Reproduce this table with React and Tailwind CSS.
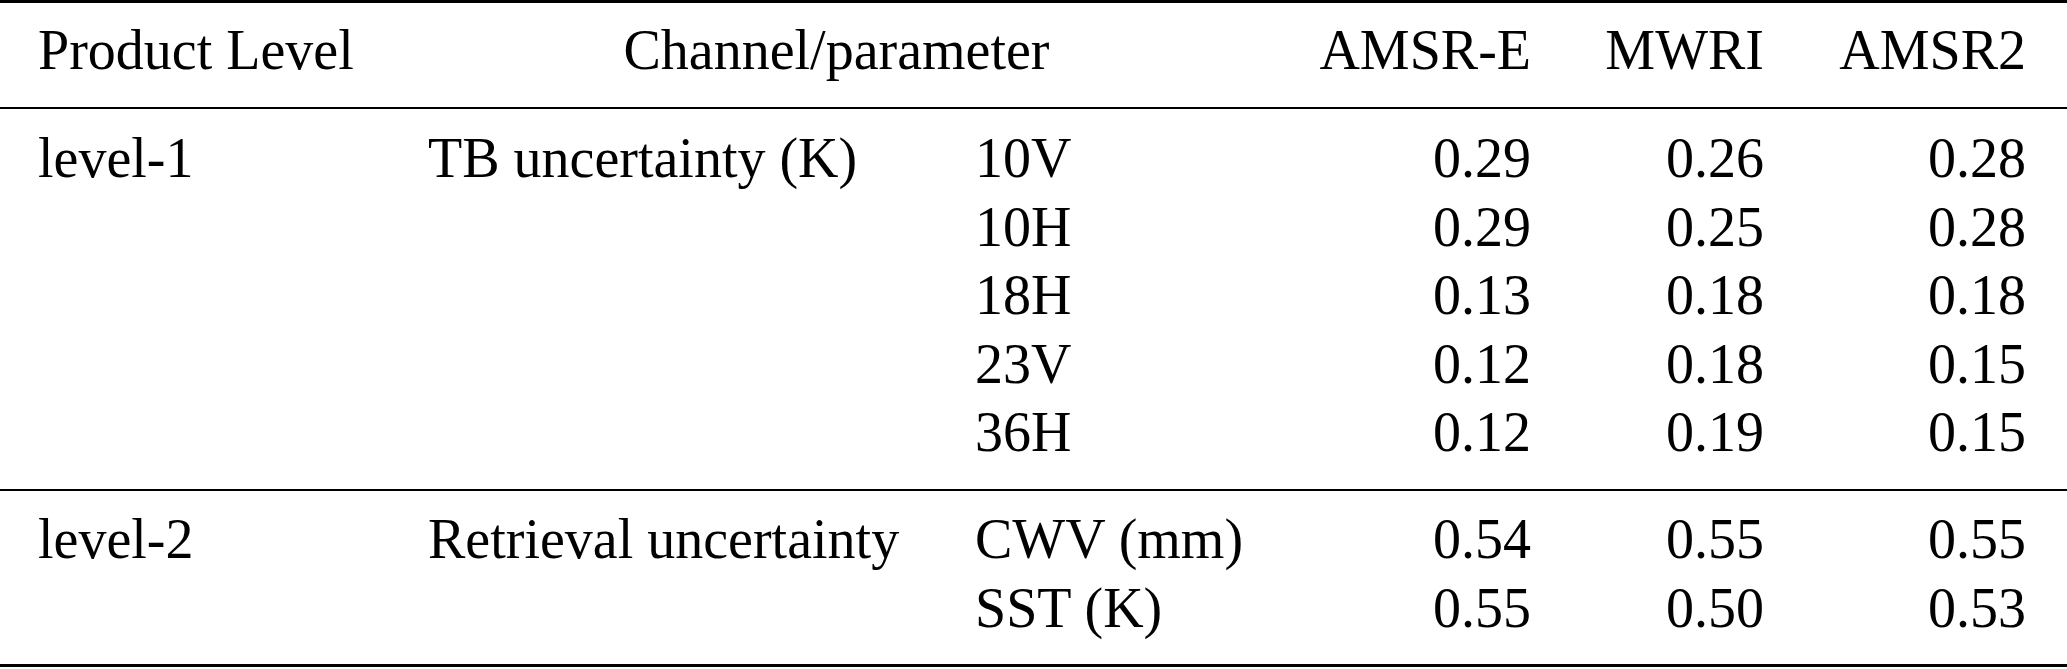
const COLS = "grid grid-cols-[390px_547px_344px_286px_233px_262px] pl-px";

const LEVEL1 = [
  { level: "level-1", param: "TB uncertainty (K)", ch: "10V", v: ["0.29", "0.26", "0.28"] },
  { ch: "10H", v: ["0.29", "0.25", "0.28"] },
  { ch: "18H", v: ["0.13", "0.18", "0.18"] },
  { ch: "23V", v: ["0.12", "0.18", "0.15"] },
  { ch: "36H", v: ["0.12", "0.19", "0.15"] },
];

const LEVEL2 = [
  { level: "level-2", param: "Retrieval uncertainty", ch: "CWV (mm)", v: ["0.54", "0.55", "0.55"] },
  { ch: "SST (K)", v: ["0.55", "0.50", "0.53"] },
];

function Row({ r }) {
  return (
    <>
      <div className="px-[37px] whitespace-nowrap">{r.level}</div>
      <div className="px-[37px] whitespace-nowrap">{r.param}</div>
      <div className="px-[37px] whitespace-nowrap">{r.ch}</div>
      {r.v.map((x, i) => (
        <div key={i} className="px-[37px] text-right">{x}</div>
      ))}
    </>
  );
}

export default function App() {
  return (
    <div className="w-[2067px] h-[669px] bg-white text-black font-['Liberation_Serif',serif] text-[56px] leading-[68.5px]">
      {/* header */}
      <div className={`${COLS} border-t-[3px] border-b-2 border-black pt-[13px] pb-[22.5px]`}>
        <div className="px-[37px] whitespace-nowrap">Product Level</div>
        <div className="col-span-2 px-[37px] text-center whitespace-nowrap">Channel/parameter</div>
        <div className="px-[37px] text-right">AMSR-E</div>
        <div className="px-[37px] text-right">MWRI</div>
        <div className="px-[37px] text-right">AMSR2</div>
      </div>

      {/* level-1 block */}
      <div className={`${COLS} border-b-2 border-black pt-[15px] pb-[22.5px]`}>
        {LEVEL1.map((r, i) => (
          <Row key={i} r={r} />
        ))}
      </div>

      {/* level-2 block */}
      <div className={`${COLS} border-b-[3px] border-black pt-[14px] pb-[22px]`}>
        {LEVEL2.map((r, i) => (
          <Row key={i} r={r} />
        ))}
      </div>
    </div>
  );
}
